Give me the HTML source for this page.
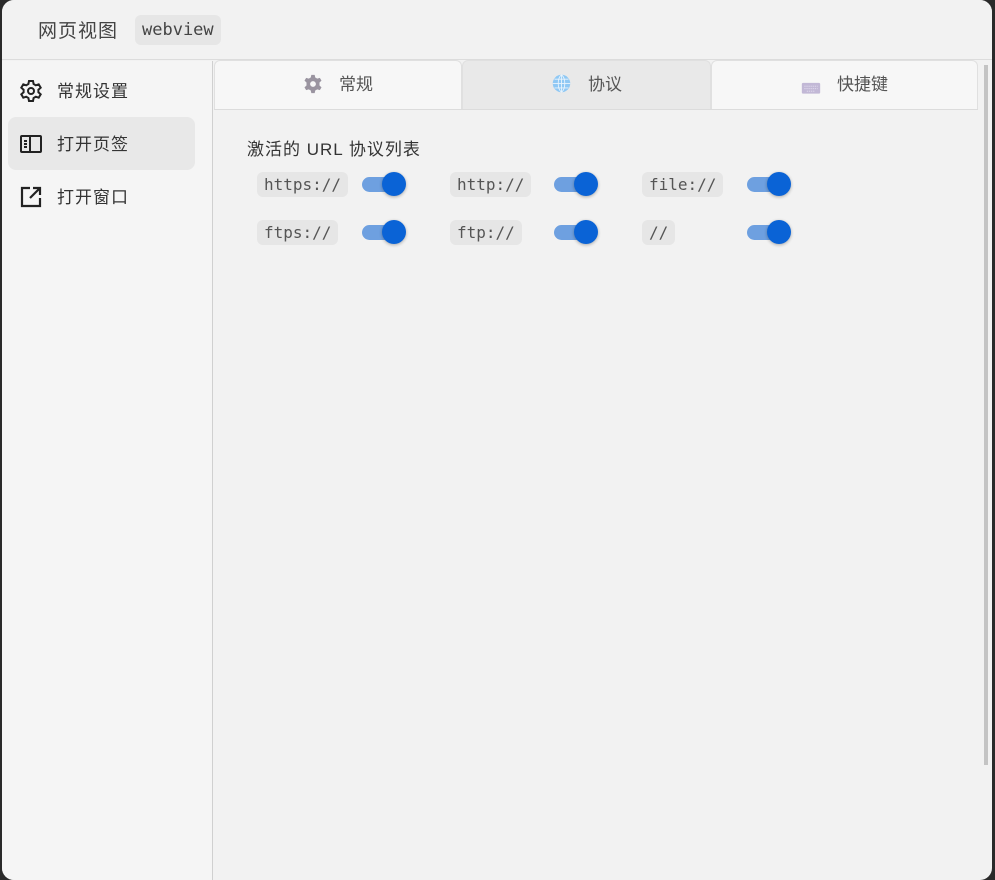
<!DOCTYPE html>
<html><head><meta charset="utf-8"><style>
*{box-sizing:border-box;margin:0;padding:0}
body{width:995px;height:880px;background:#2a2a2a;overflow:hidden;font-family:"Liberation Sans","Noto Sans CJK SC",sans-serif;color:#333}
.win{position:absolute;left:2px;top:0;width:990px;height:880px;background:#f2f2f2;border-radius:12px;overflow:hidden}
.head{position:absolute;left:0;top:0;width:100%;height:60px;border-bottom:1px solid #dcdcdc;background:#f2f2f2}
.title{position:absolute;left:36px;top:16px;font-size:19px;color:#444;letter-spacing:1px}
.code{font-family:"DejaVu Sans Mono","Liberation Mono",monospace;background:#e6e6e6;border-radius:6px;color:#444}
.tcode{position:absolute;left:133px;top:15px;height:30px;padding:0 7px;line-height:30px;font-size:17px}
.side{position:absolute;left:0;top:61px;width:211px;bottom:0;background:#f5f5f5;border-right:1px solid #d0d0d0}
.item{position:absolute;left:6px;width:187px;height:53px;border-radius:8px;font-size:17px;color:#333;letter-spacing:1px}
.item span{position:absolute;left:49px;top:13px}
.item svg{position:absolute;left:11px;top:15px}
.tabs{position:absolute;left:212px;top:60px;width:764px;height:50px;border-bottom:1px solid #dcdcdc}
.tab{position:absolute;top:0;height:49px;font-size:17px;color:#555;text-align:center;line-height:48px;border:1px solid #e0e0e0;border-bottom:none;border-radius:6px 6px 0 0;background:#f7f7f7}
.tab svg{vertical-align:-4px;margin-right:16px}
.label{position:absolute;left:245px;top:135px;font-size:17px;color:#333;letter-spacing:1px}
.chip{position:absolute;height:25px;line-height:25px;padding:0 7px;font-size:16px;color:#555}
.tg{position:absolute;width:44px;height:26px}
.tg .tr{position:absolute;left:0;top:6px;width:40px;height:15px;border-radius:8px;background:#6ea0e0}
.tg .kn{position:absolute;left:20px;top:1px;width:24px;height:24px;border-radius:50%;background:#0a63d6;box-shadow:0 1px 3px rgba(0,0,0,.3)}
.sb{position:absolute;left:982px;top:65px;width:4px;height:700px;background:#c4c4c4}
</style></head><body>
<div class="win">
<div class="head"><div class="title">网页视图</div><div class="code tcode">webview</div></div>
<div class="side">
<div class="item" style="top:3px"><svg width="24" height="24" viewBox="0 0 24 24" fill="none" stroke="#222" stroke-width="2"><circle cx="12" cy="12" r="3"/><path d="M10 2h4l.6 3 2.2 1.3 2.9-1 2 3.4-2.3 2v2.6l2.3 2-2 3.4-2.9-1-2.2 1.3-.6 3h-4l-.6-3-2.2-1.3-2.9 1-2-3.4 2.3-2v-2.6l-2.3-2 2-3.4 2.9 1L9.4 5z"/></svg><span>常规设置</span></div>
<div class="item" style="top:56px;background:#e8e8e8"><svg width="24" height="24" viewBox="0 0 24 24" fill="none" stroke="#222" stroke-width="2"><rect x="2" y="4" width="20" height="16" rx="1"/><path d="M11 4v16M5 9h3M5 12h3M5 15h3"/></svg><span>打开页签</span></div>
<div class="item" style="top:109px"><svg width="24" height="24" viewBox="0 0 24 24" fill="none" stroke="#222" stroke-width="2.2"><path d="M11 3H3v18h18v-8M14 3h7v7M21 3 11 13"/></svg><span>打开窗口</span></div>
</div>
<div class="tabs">
<div class="tab" style="left:0;width:248px"><svg width="20" height="20" viewBox="0 0 24 24"><path fill="#9a94a0" d="M10 1h4l.7 3.2 2.4 1.4 3.1-1 2 3.4-2.4 2.2v3.6l2.4 2.2-2 3.4-3.1-1-2.4 1.4L14 23h-4l-.7-3.2-2.4-1.4-3.1 1-2-3.4 2.4-2.2v-3.6L1.8 8l2-3.4 3.1 1 2.4-1.4z"/><circle cx="12" cy="12" r="3.5" fill="#f7f7f7"/></svg>常规</div>
<div class="tab" style="left:248px;width:249px;background:#e9e9e9"><svg width="21" height="21" viewBox="0 0 24 24"><circle cx="12" cy="12" r="10" fill="#8fc8f4"/><path d="M2 12h20M12 2v20M4 7h16M4 17h16M12 2c-5 4-5 16 0 20M12 2c5 4 5 16 0 20" stroke="#e9f4fd" stroke-width="1" fill="none"/></svg>协议</div>
<div class="tab" style="left:497px;width:267px"><svg width="20" height="20" viewBox="0 0 24 24" style="vertical-align:-7px"><rect x="1" y="7" width="22" height="13" rx="1.5" fill="#c2b8d6"/><path d="M4 11h16M4 14h16M7 17h10" stroke="#e4def0" stroke-width="1" stroke-dasharray="1.5 1"/></svg>快捷键</div>
</div>
<div class="label">激活的 URL 协议列表</div>
<div class="code chip" style="left:255px;top:172px">https://</div>
<div class="tg" style="left:360px;top:171px"><div class="tr"></div><div class="kn"></div></div>
<div class="code chip" style="left:448px;top:172px">http://</div>
<div class="tg" style="left:552px;top:171px"><div class="tr"></div><div class="kn"></div></div>
<div class="code chip" style="left:640px;top:172px">file://</div>
<div class="tg" style="left:745px;top:171px"><div class="tr"></div><div class="kn"></div></div>
<div class="code chip" style="left:255px;top:220px">ftps://</div>
<div class="tg" style="left:360px;top:219px"><div class="tr"></div><div class="kn"></div></div>
<div class="code chip" style="left:448px;top:220px">ftp://</div>
<div class="tg" style="left:552px;top:219px"><div class="tr"></div><div class="kn"></div></div>
<div class="code chip" style="left:640px;top:220px">//</div>
<div class="tg" style="left:745px;top:219px"><div class="tr"></div><div class="kn"></div></div>
<div class="sb"></div>
</div>
</body></html>
